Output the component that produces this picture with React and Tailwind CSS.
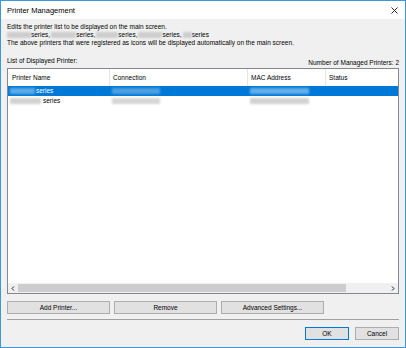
import React from "react";

const Blur = ({ w, c, ml = 0, mr = 0 }) => (
  <span
    className="inline-block h-[6px] align-middle blur-[1.3px]"
    style={{ width: w, background: c, marginLeft: ml, marginRight: mr }}
  />
);

const Btn = ({ children, w, def }) => (
  <div
    className={`h-[13px] flex items-center justify-center bg-[#e1e1e1] text-[6.5px] text-black border ${
      def ? "border-[#0078d7]" : "border-[#adadad]"
    }`}
    style={{ width: w }}
  >
    {children}
  </div>
);

export default function App() {
  return (
    <div
      className="w-[406px] h-[348px] border border-[#3c97dd] bg-[#f0f0f0] flex flex-col overflow-hidden text-black"
      style={{ fontFamily: '"Liberation Sans", Arial, sans-serif' }}
    >
      {/* title bar */}
      <div className="h-[18px] bg-white flex items-center justify-between pl-[6px] pr-[7px] shrink-0">
        <span className="text-[7.5px] leading-[9px]">Printer Management</span>
        <svg width="7" height="7" viewBox="0 0 7 7">
          <path d="M0.5 0.5 L6.5 6.5 M6.5 0.5 L0.5 6.5" stroke="#111" strokeWidth="0.9" />
        </svg>
      </div>

      <div className="flex-1 flex flex-col px-[6px] pt-[4px]">
        <div className="text-[6.5px] leading-[8px] whitespace-nowrap">
          <div>Edits the printer list to be displayed on the main screen.</div>
          <div className="flex items-center">
            <Blur w={24} c="#cdcdcd" />
            <span>series,</span>
            <Blur w={25} c="#cdcdcd" ml={1} />
            <span>series,</span>
            <Blur w={22} c="#cdcdcd" ml={1} />
            <span>series,</span>
            <Blur w={24} c="#cdcdcd" ml={1} />
            <span>series,</span>
            <Blur w={9} c="#cdcdcd" ml={1} />
            <span>series</span>
          </div>
          <div>The above printers that were registered as icons will be displayed automatically on the main screen.</div>
        </div>

        <div className="mt-[10px] flex justify-between items-end text-[6.5px] leading-[8px] whitespace-nowrap">
          <span className="pb-[2px]">List of Displayed Printer:</span>
          <span>Number of Managed Printers: 2</span>
        </div>

        <div className="mt-[1px] h-[226px] border border-[#828790] bg-white flex flex-col">
          {/* header */}
          <div className="h-[17px] flex text-[6.5px] leading-[8px] shrink-0">
            <div className="w-[102px] pl-[4px] flex items-center border-r border-[#e5e5e5]">Printer Name</div>
            <div className="w-[138px] pl-[3px] flex items-center border-r border-[#e5e5e5]">Connection</div>
            <div className="w-[78px] pl-[3px] flex items-center border-r border-[#e5e5e5]">MAC Address</div>
            <div className="flex-1 pl-[3px] flex items-center">Status</div>
          </div>
          {/* row 1 selected */}
          <div className="h-[10px] flex items-center bg-[#0078d7] text-white text-[6.5px] leading-[8px] shrink-0">
            <div className="w-[102px] pl-[2px] flex items-center">
              <Blur w={25} c="#5aa9e8" />
              <span className="ml-[1px]">series</span>
            </div>
            <div className="w-[138px] pl-[2px] flex items-center">
              <Blur w={48} c="#4d9fe2" />
            </div>
            <div className="w-[78px] pl-[2px] flex items-center">
              <Blur w={59} c="#62afea" />
            </div>
          </div>
          {/* row 2 */}
          <div className="h-[10px] flex items-center text-[6.5px] leading-[8px] shrink-0">
            <div className="w-[102px] pl-[2px] flex items-center">
              <Blur w={31} c="#d2d2d2" />
              <span className="ml-[2px]">series</span>
            </div>
            <div className="w-[138px] pl-[2px] flex items-center">
              <Blur w={48} c="#d6d6d6" />
            </div>
            <div className="w-[78px] pl-[2px] flex items-center">
              <Blur w={59} c="#d2d2d2" />
            </div>
          </div>
          <div className="flex-1" />
          {/* h scrollbar */}
          <div className="h-[10px] bg-[#f0f0f0] flex items-center shrink-0">
            <div className="w-[10px] h-full flex items-center justify-center">
              <svg width="4" height="5" viewBox="0 0 4 5">
                <path d="M3 0.5 L1 2.5 L3 4.5" stroke="#222" strokeWidth="1" fill="none" />
              </svg>
            </div>
            <div className="w-[328px] h-[8px] bg-[#cdcdcd]" />
            <div className="flex-1" />
            <div className="w-[10px] h-full flex items-center justify-center">
              <svg width="4" height="5" viewBox="0 0 4 5">
                <path d="M1 0.5 L3 2.5 L1 4.5" stroke="#222" strokeWidth="1" fill="none" />
              </svg>
            </div>
          </div>
        </div>

        <div className="mt-[7px] flex gap-[4px]">
          <Btn w={103}>Add Printer...</Btn>
          <Btn w={103}>Remove</Btn>
          <Btn w={103}>Advanced Settings...</Btn>
        </div>

        <div className="mt-[5px] h-[1px] bg-[#a0a0a0]" />

        <div className="mt-[7px] flex justify-end gap-[6px]">
          <Btn w={44} def>OK</Btn>
          <Btn w={44}>Cancel</Btn>
        </div>
      </div>
    </div>
  );
}
